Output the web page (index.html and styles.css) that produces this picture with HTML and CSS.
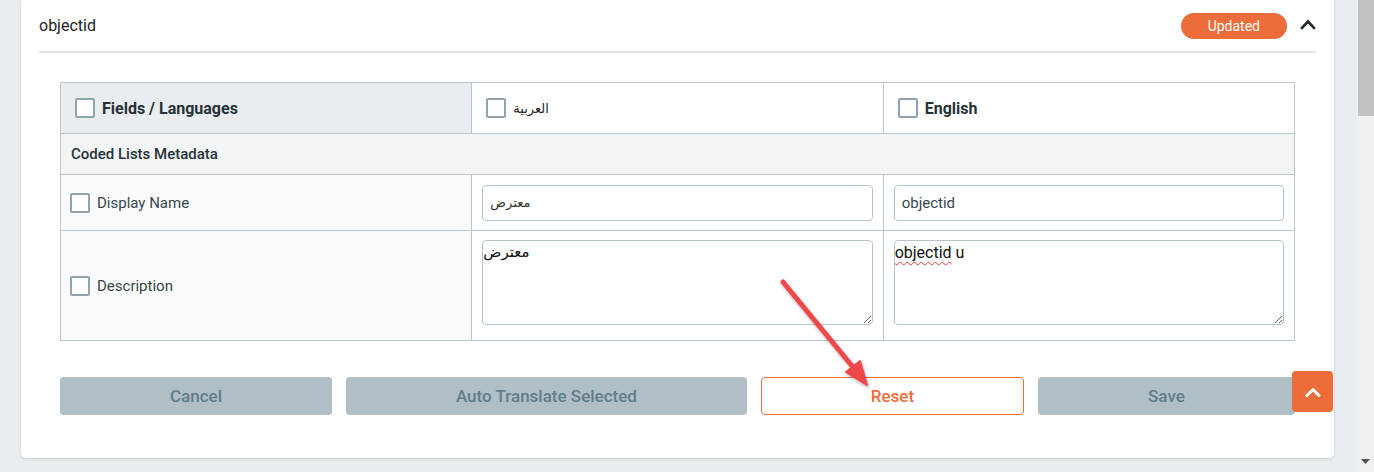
FILE: index.html
```html
<!DOCTYPE html>
<html lang="en">
<head>
<meta charset="utf-8">
<title>objectid</title>
<link rel="stylesheet" href="styles.css">
</head>
<body>
<div class="page">
  <main class="main">
    <section class="card">
      <header class="card-head">
        <h2 class="card-title">objectid</h2>
        <div class="head-actions">
          <span class="badge">Updated</span>
          <svg class="chev" width="16" height="12" viewBox="0 0 16 12"><polyline points="2,10 8,3.5 14,10" fill="none" stroke="#1e2a30" stroke-width="2.6" stroke-linecap="square"/></svg>
        </div>
      </header>
      <div class="card-body">
        <table class="tr-table">
          <colgroup><col><col><col></colgroup>
          <thead>
            <tr class="row-head">
              <th class="cell-first"><label class="chk-label"><span class="chk"></span><span>Fields / Languages</span></label></th>
              <th><label class="chk-label"><span class="chk"></span><span class="ar-head" dir="rtl">العربية</span></label></th>
              <th><label class="chk-label"><span class="chk"></span><span>English</span></label></th>
            </tr>
          </thead>
          <tbody>
            <tr class="row-group"><td colspan="3">Coded Lists Metadata</td></tr>
            <tr class="row-name">
              <td class="cell-first"><label class="chk-label field"><span class="chk"></span><span>Display Name</span></label></td>
              <td><div class="input ar">معترض</div></td>
              <td><div class="input">objectid</div></td>
            </tr>
            <tr class="row-desc">
              <td class="cell-first"><label class="chk-label field"><span class="chk"></span><span>Description</span></label></td>
              <td class="cell-ta"><div class="textarea ar-ta">معترض</div></td>
              <td class="cell-ta"><div class="textarea"><span class="misspelled">objectid</span> u</div></td>
            </tr>
          </tbody>
        </table>
        <div class="actions">
          <button class="btn btn-gray btn-cancel">Cancel</button>
          <button class="btn btn-gray btn-auto">Auto Translate Selected</button>
          <button class="btn btn-outline btn-reset">Reset</button>
          <button class="btn btn-gray btn-save">Save</button>
        </div>
      </div>
    </section>
  </main>
  <aside class="scrollbar">
    <div class="thumb"></div>
    <div class="track"></div>
    <div class="arrow-down"><svg width="9" height="5" viewBox="0 0 9 5"><polygon points="0,0 9,0 4.5,5" fill="#505050"/></svg></div>
  </aside>
</div>
<button class="to-top" aria-label="Scroll to top"><svg width="16" height="10" viewBox="0 0 16 10"><polyline points="2,8.5 8,2.5 14,8.5" fill="none" stroke="#fff" stroke-width="3" stroke-linecap="round" stroke-linejoin="round"/></svg></button>
<svg class="annot" width="1374" height="472" viewBox="0 0 1374 472">
  <defs>
    <filter id="sh" x="-20%" y="-20%" width="140%" height="140%"><feDropShadow dx="1" dy="2" stdDeviation="1.5" flood-color="#000" flood-opacity="0.3"/></filter>
  </defs>
  <g filter="url(#sh)">
    <line x1="783" y1="282" x2="857" y2="372" stroke="#f0464b" stroke-width="5" stroke-linecap="round"/>
    <polygon points="867,385 846,372 860,361" fill="#f0464b" stroke="#f0464b" stroke-width="2" stroke-linejoin="round"/>
  </g>
</svg>
</body>
</html>
```
FILE: styles.css
```css
* { box-sizing: border-box; }
html, body { margin: 0; height: 100%; overflow: hidden; }
body {
  background: #e9edf0;
  font-family: Roboto, "Noto Sans", "DejaVu Sans", sans-serif;
  color: #263238;
}
.page { display: flex; height: 100%; }
.main { flex: 1; padding: 0 23px 0 21px; }
.card {
  background: #fff;
  border-radius: 0 0 5px 5px;
  box-shadow: 0 1px 3px rgba(60, 80, 90, 0.22);
  padding: 0 18px;
}
.card-head {
  height: 53px;
  border-bottom: 2px solid #e2e6e9;
  display: flex;
  align-items: center;
  justify-content: space-between;
}
.card-title { margin: 0; font-size: 16px; font-weight: 400; color: #1f2326; }
.head-actions { display: flex; align-items: center; gap: 13px; }
.badge {
  background: #ec6c3a;
  color: #fff;
  font-size: 14px;
  height: 26px;
  line-height: 26px;
  padding: 0 27px;
  border-radius: 13px;
}
.chev { display: block; margin-top: -3px; }
.card-body { padding: 29px 21px 43px; }
.tr-table {
  width: 100%;
  table-layout: fixed;
  border-collapse: collapse;
}
.tr-table th, .tr-table td {
  border: 1px solid #bcc7cd;
  padding: 0 10px;
  text-align: left;
  vertical-align: middle;
}
.row-head th { height: 51px; background: #fff; font-size: 16px; font-weight: 700; color: #263238; }
.row-head th.cell-first { background: #e9edf0; }
.row-group td { height: 41px; background: #f2f4f6; font-size: 15px; font-weight: 500; color: #263238; }
.row-name td { height: 56px; }
.row-desc td { height: 110px; }
.row-desc td.cell-ta { padding-top: 9px; padding-bottom: 15px; }
.tr-table td.cell-first { background: #fafafa; }
.chk-label { display: flex; align-items: center; gap: 7px; padding-left: 4px; }
.chk {
  width: 20px; height: 20px;
  border: 2px solid #90a4ae;
  border-radius: 2px;
  background: #fff;
  flex: none;
}
.ar-head { font-size: 13px; font-weight: 400; color: #1f2326; }
.field { font-size: 15px; color: #37474f; font-weight: 400; padding-left: 0; margin-left: -1px; }
.input {
  height: 36px;
  border: 1px solid #b7c3ca;
  border-radius: 4px;
  padding: 0 7px;
  display: flex;
  align-items: center;
  font-size: 15px;
  color: #37474f;
  background: #fff;
}
.input.ar { font-size: 13px; color: #333; }
.textarea {
  height: 85px;
  border: 1px solid #b7c3ca;
  border-radius: 4px;
  padding: 2px 0;
  font-size: 16px;
  line-height: 19px;
  color: #111;
  background: #fff;
  overflow: auto;
  resize: vertical;
}
.ar-ta { font-size: 15px; }
.misspelled {
  text-decoration: underline wavy #e53935;
  text-decoration-thickness: 1px;
  text-underline-offset: 3px;
  text-decoration-skip-ink: none;
}
.actions { display: flex; gap: 14px; margin-top: 36px; }
.btn {
  height: 38px;
  min-width: 0;
  border-radius: 4px;
  font-family: inherit;
  font-size: 17px;
  font-weight: 500;
  border: 1px solid transparent;
  padding: 0;
}
.btn-cancel { flex: 272 1 0; }
.btn-auto { flex: 402 1 0; }
.btn-reset { flex: 263 1 0; }
.btn-save { flex: 257 1 0; }
.btn-gray { background: #b0bec5; color: #607d8b; }
.btn-outline { background: #fff; border-color: #ec6c3a; color: #ec6c3a; }
.scrollbar { width: 17px; display: flex; flex-direction: column; background: #f1f1f1; }
.thumb { height: 116px; background: #c1c1c1; margin-left: 1px; }
.track { flex: 1; }
.arrow-down { height: 17px; display: flex; align-items: center; justify-content: center; padding-bottom: 4px; }
.to-top {
  position: fixed;
  left: 1292px;
  top: 371px;
  width: 41px;
  height: 41px;
  background: #ec6c3a;
  border: none;
  border-radius: 4px;
  display: flex;
  align-items: center;
  justify-content: center;
  padding: 0;
}
.annot { position: fixed; left: 0; top: 0; pointer-events: none; }
```
